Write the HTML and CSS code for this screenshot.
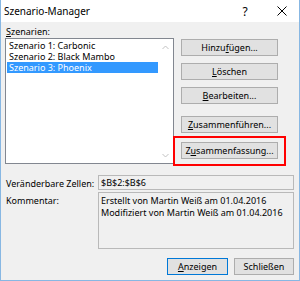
FILE: index.html
```html
<!DOCTYPE html>
<html lang="de">
<head>
    <meta charset="UTF-8">
    <title>Szenario-Manager</title>
    <link rel="stylesheet" href="styles.css">
</head>
<body>
<div class="window">
    <div class="titlebar">
        <span class="title">Szenario-Manager</span>
        <span class="tb-btn help">?</span>
        <span class="tb-btn close">
            <svg width="10" height="10" viewBox="0 0 10 10"><path d="M0.5 0.5L9.5 9.5M9.5 0.5L0.5 9.5" stroke="#000" stroke-width="1" fill="none"/></svg>
        </span>
    </div>

    <div class="content">
        <div class="main-row">
            <div class="list-col">
                <div class="label"><u>S</u>zenarien:</div>
                <div class="listbox">
                    <ul class="items">
                        <li>Szenario 1: Carbonic</li>
                        <li>Szenario 2: Black Mambo</li>
                        <li class="selected">Szenario 3: Phoenix</li>
                    </ul>
                    <div class="scrollbar">
                        <svg width="7" height="5" viewBox="0 0 7 5"><path d="M0.5 4L3.5 1L6.5 4" stroke="#c2c2c2" fill="none"/></svg>
                        <svg width="7" height="5" viewBox="0 0 7 5"><path d="M0.5 1L3.5 4L6.5 1" stroke="#c2c2c2" fill="none"/></svg>
                    </div>
                </div>
            </div>
            <div class="btn-col">
                <button class="btn">Hinzu<u>f</u>ügen...</button>
                <button class="btn"><u>L</u>öschen</button>
                <button class="btn"><u>B</u>earbeiten...</button>
                <button class="btn btn-gap"><u>Z</u>usammenführen...</button>
                <div class="highlight">
                    <button class="btn">Z<u>u</u>sammenfassung...</button>
                </div>
            </div>
        </div>

        <div class="field-row first">
            <span class="field-label">Veränderbare Zellen:</span>
            <div class="field">$B$2:$B$6</div>
        </div>
        <div class="field-row">
            <span class="field-label">Kommentar:</span>
            <div class="field comment">Erstellt von Martin Weiß am 01.04.2016<br>Modifiziert von Martin Weiß am 01.04.2016</div>
        </div>

        <div class="footer">
            <button class="btn btn-small default"><u>A</u>nzeigen</button>
            <button class="btn btn-small">Schließen</button>
        </div>
    </div>
</div>
</body>
</html>
```

FILE: styles.css
```css
body {
    margin: 0;
    font-family: "Noto Sans", "Open Sans", sans-serif;
    font-size: 9px;
    color: #000;
}
.window {
    width: 300px;
    height: 281px;
    box-sizing: border-box;
    border: 1px solid #87b7e3;
    border-top: none;
    background-color: #f0f0f0;
    display: flex;
    flex-direction: column;
}
.titlebar {
    height: 22px;
    flex-shrink: 0;
    background-color: #fff;
    display: flex;
    align-items: center;
    padding-left: 3px;
    font-size: 10px;
}
.title {
    flex: 1;
}
.tb-btn {
    text-align: center;
    font-size: 12px;
}
.help {
    width: 40px;
}
.close {
    width: 34px;
    display: flex;
    justify-content: center;
}
.content {
    padding: 2px 4px 0 4px;
    display: flex;
    flex-direction: column;
}
.main-row {
    display: flex;
}
.list-col {
    width: 169px;
}
.label {
    height: 14px;
    line-height: 15px;
    padding-left: 1px;
}
.listbox {
    height: 124px;
    border: 1px solid #828790;
    background: #fff;
    display: flex;
}
.items {
    flex: 1;
    list-style: none;
    margin: 0;
    padding: 1px 0 0 1px;
}
.items li {
    height: 11px;
    line-height: 11px;
    padding-left: 2px;
    white-space: nowrap;
}
.items li.selected {
    background-color: #3399ff;
    color: #fff;
}
.scrollbar {
    width: 15px;
    display: flex;
    flex-direction: column;
    justify-content: space-between;
    align-items: center;
    padding: 6px 0 5px 0;
}
.btn-col {
    margin-left: 7px;
    margin-top: 15px;
    width: 97px;
    display: flex;
    flex-direction: column;
}
.btn {
    font-family: inherit;
    font-size: 9px;
    height: 17px;
    padding: 0;
    margin: 0 0 7px 0;
    background-color: #e1e1e1;
    border: 1px solid #adadad;
    color: #000;
    line-height: 15px;
    white-space: nowrap;
}
.btn-gap {
    margin-top: 5px;
}
.highlight {
    margin: -4px -8px 0 -8px;
    border: 2px solid #ff0000;
    padding: 4px 6px 5px 6px;
}
.highlight .btn {
    width: 100%;
    margin: 0;
}
.field-row {
    display: flex;
    margin-top: 2px;
    padding-left: 1px;
}
.field-row.first {
    margin-top: 9px;
}
.field-label {
    width: 92px;
    flex-shrink: 0;
    padding-top: 2px;
    white-space: nowrap;
}
.field {
    flex: 1;
    height: 13px;
    border: 1px solid #b9b9b9;
    padding: 0 2px;
    line-height: 14px;
    margin-right: 1px;
    white-space: nowrap;
}
.comment {
    height: 57px;
    line-height: 12px;
    padding-top: 2px;
    box-sizing: border-box;
}
.footer {
    display: flex;
    justify-content: flex-end;
    margin-top: 9px;
    margin-right: 1px;
}
.btn-small {
    width: 60px;
    margin: 0 0 0 6px;
}
.default {
    width: 61px;
    border-color: #0078d7;
}
```
